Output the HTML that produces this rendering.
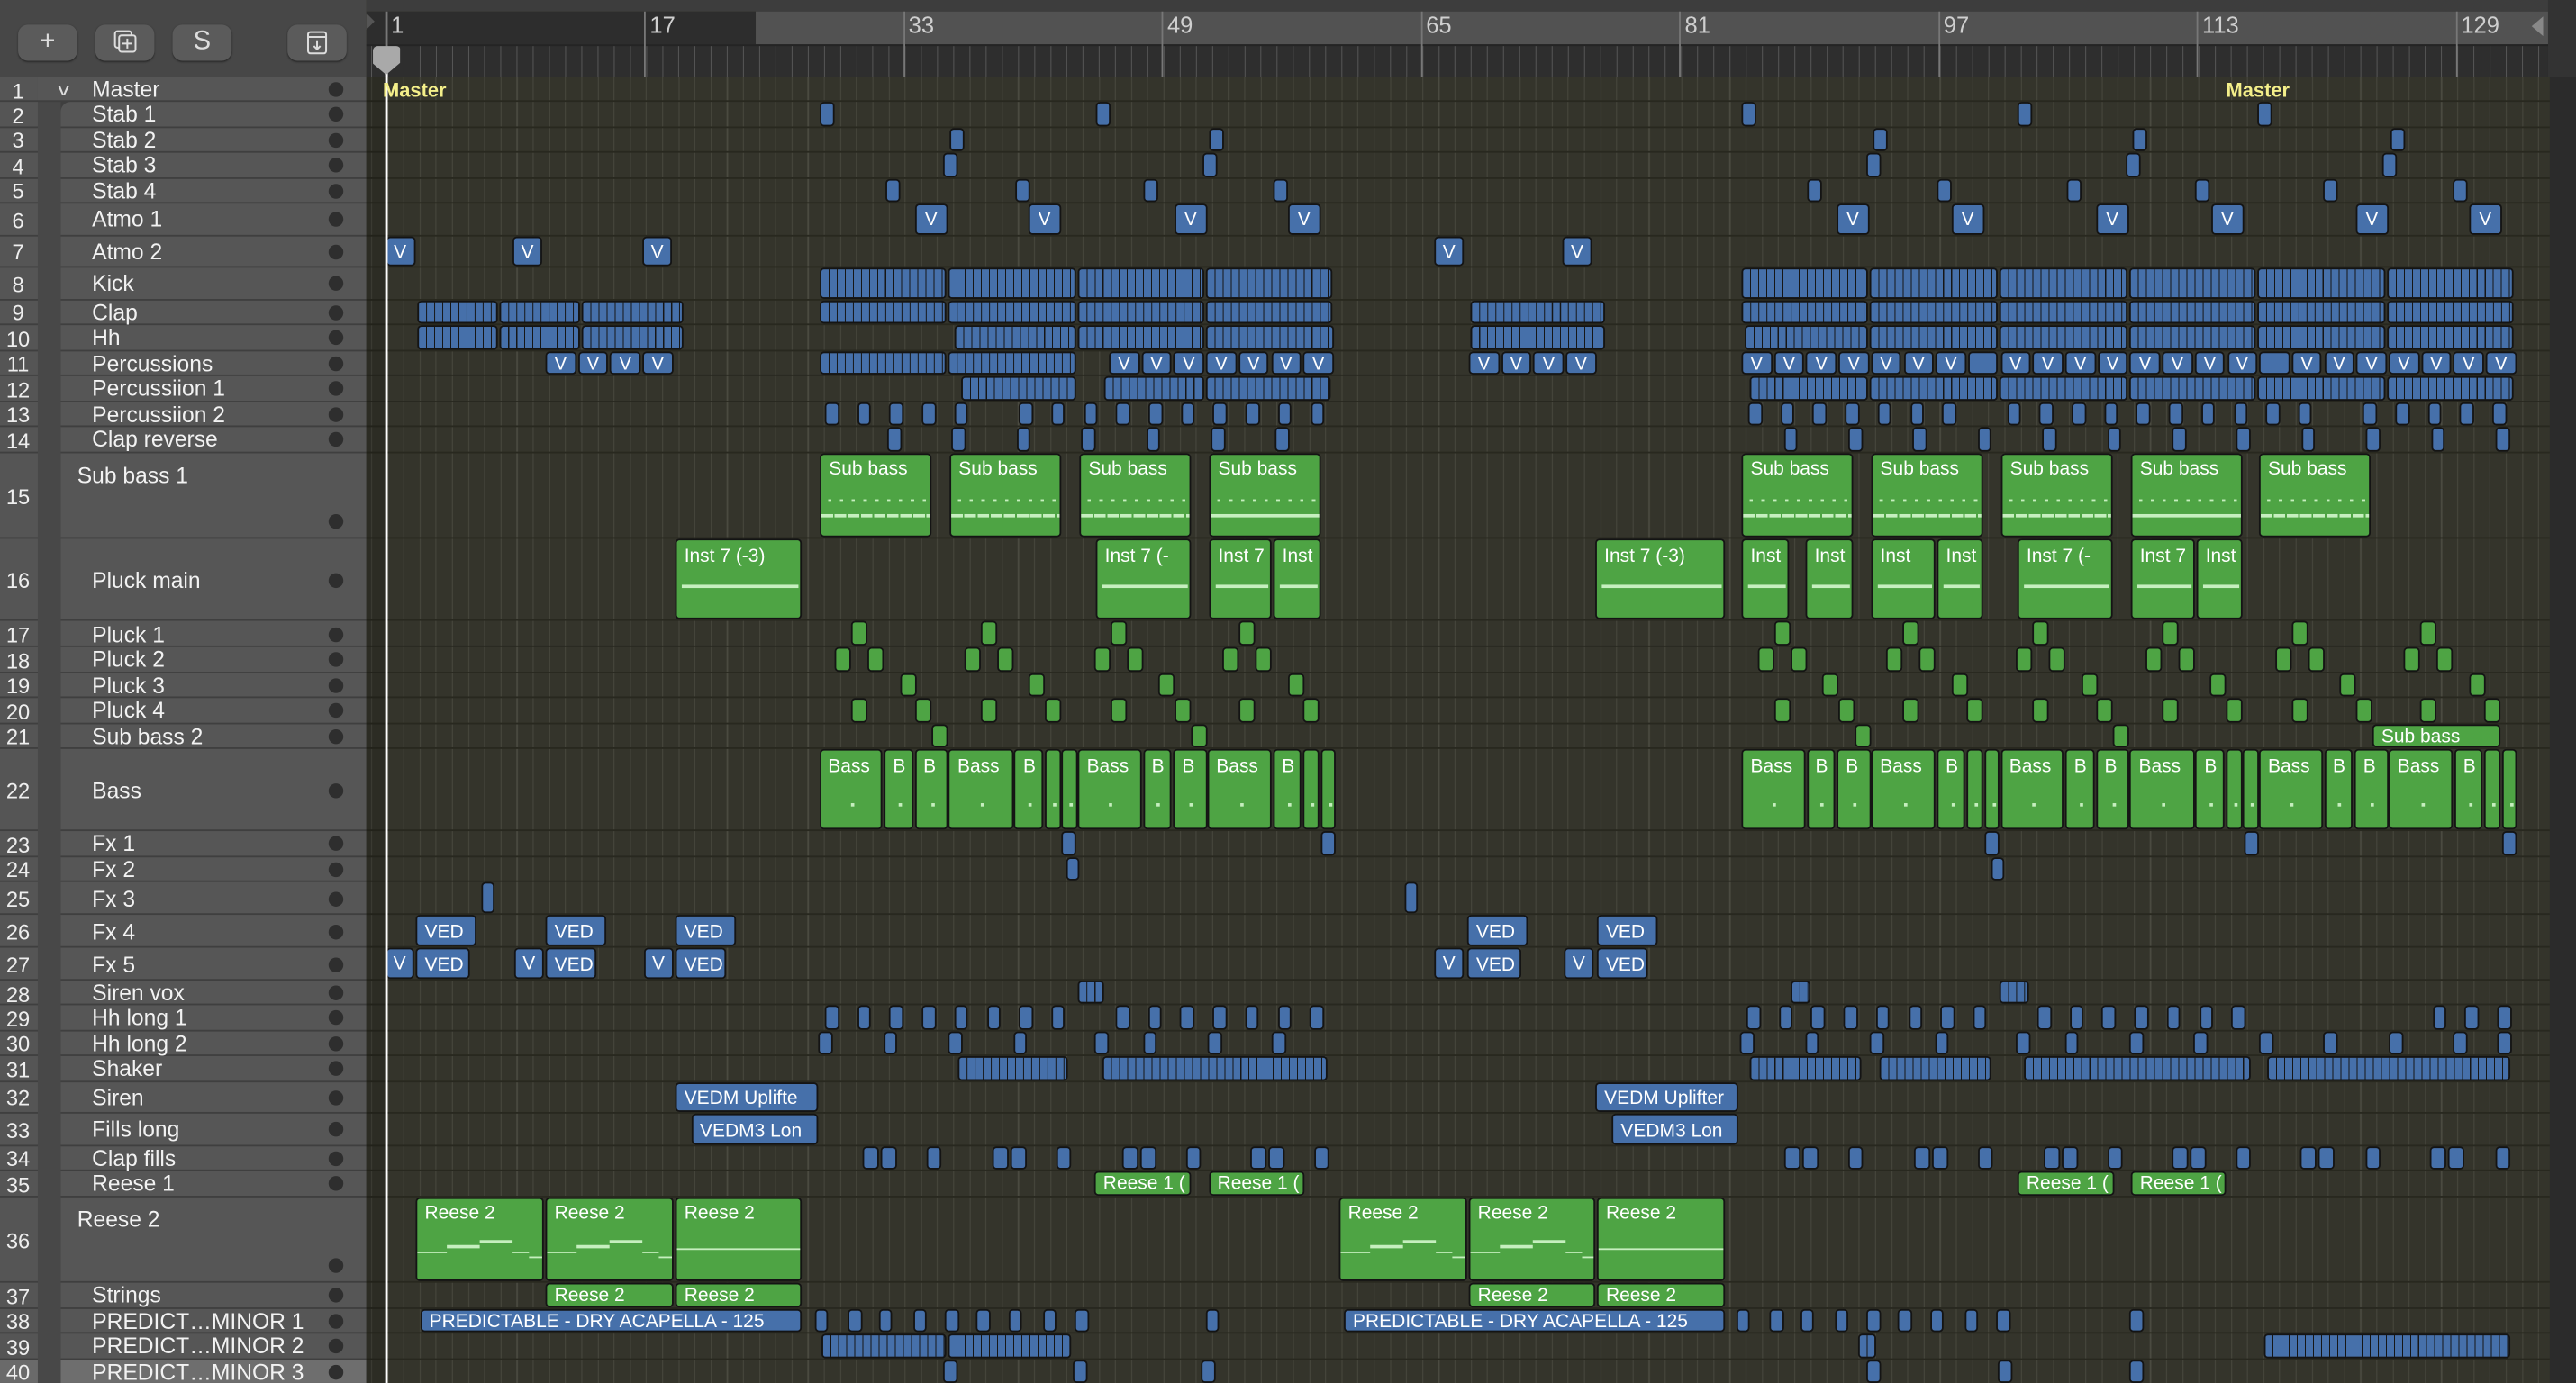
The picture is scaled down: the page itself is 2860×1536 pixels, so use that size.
<!DOCTYPE html>
<html><head><meta charset="utf-8">
<style>
html,body{margin:0;padding:0;background:#34342b;width:2860px;height:1536px;overflow:hidden}
#root{position:absolute;left:0;top:0;width:1568px;height:842px;transform:scale(1.82398,1.8242);transform-origin:0 0;overflow:hidden;font-family:"Liberation Sans",sans-serif;background:#34342b}
.abs{position:absolute}
#hdr{left:0;top:0;width:222.5px;height:47px;background:#474747}
.btn{position:absolute;top:15px;height:22px;width:36px;background:#5b5b5b;border-radius:6px;box-shadow:0 0.6px 1px #2a2a2a;color:#ddd;text-align:center;font-size:16px;line-height:22px}
#arr{left:222.5px;top:47px;width:1329px;height:795px;background-color:#34342b;background-image:repeating-linear-gradient(90deg,transparent 0 9.3px,#4a4a40 9.3px 9.844px);background-position:3.43px 0}
.row{position:absolute;left:0;width:1329px;border-bottom:0.8px solid #28281f;box-sizing:border-box}
.b{position:absolute;box-sizing:border-box;border:0.6px solid #141414;border-radius:2.5px;overflow:hidden;color:#fff;font-size:11.5px;line-height:14px;white-space:nowrap}
.bl{background:#4670aa}
.gr{background:#4ea444}
.d{background:repeating-linear-gradient(90deg,#4670aa 0 4.35px,#161616 4.35px 4.92px)}
.lbl{padding-left:4.5px;padding-top:2.5px}
.v{text-align:center}
.ln{position:absolute;height:1.4px;background:#c6efbf}
.num{position:absolute;left:0;width:22px;text-align:center;color:#eee;font-size:13px}
.nm{position:absolute;color:#f2f2f2;font-size:13.5px;white-space:nowrap}
.dot{position:absolute;left:199.5px;width:9px;height:9px;border-radius:50%;background:#2e2e2e}
</style></head><body>
<div id="root">
  <div id="hdr" class="abs">
    <div class="btn" style="left:11px">+</div>
    <div class="btn" style="left:58px"><svg width="36" height="22" viewBox="0 0 36 22"><rect x="12" y="4" width="10" height="10" rx="1.5" fill="none" stroke="#ddd" stroke-width="1.1"/><rect x="14.5" y="6.5" width="10" height="10" rx="1.5" fill="#5b5b5b" stroke="#ddd" stroke-width="1.1"/><path d="M19.5 8.5v6M16.5 11.5h6" stroke="#ddd" stroke-width="1.1"/></svg></div>
    <div class="btn" style="left:105px">S</div>
    <div class="btn" style="left:175px"><svg width="36" height="22" viewBox="0 0 36 22"><rect x="12.5" y="4.5" width="11" height="13" rx="1.5" fill="none" stroke="#ddd" stroke-width="1.1"/><path d="M12.5 7.5h11M18 9.5v5.5M16 13l2 2 2-2" fill="none" stroke="#ddd" stroke-width="1.1"/></svg></div>
  </div>
  <div class="abs" style="left:222.5px;top:0;width:1345.5px;height:6.5px;background:#3d3d3d"></div>
  <div class="abs" style="left:222.5px;top:6.5px;width:237px;height:20px;background:#2d2d2d"></div>
  <div class="abs" style="left:459.5px;top:6.5px;width:1091px;height:20px;background:#525252"></div>
  <div class="abs" style="left:222.5px;top:26.5px;width:1329px;height:20.5px;background:#2e2e2e;background-image:repeating-linear-gradient(90deg,transparent 0 9.3px,#565656 9.3px 9.844px);background-position:3.43px 0;border-top:0.8px solid #242424;box-sizing:border-box"></div>
  <div class="abs" style="left:1551px;top:0;width:17px;height:842px;background:#2b2b2b"></div>
  <div class="abs" style="left:1551px;top:0;width:17px;height:47px;background:#333"></div>
  <div class="abs" style="left:222.5px;top:8px;width:0;height:0;border-top:5px solid transparent;border-bottom:5px solid transparent;border-left:5px solid #555"></div>
  <div class="abs" style="left:1541px;top:10px;width:0;height:0;border-top:6px solid transparent;border-bottom:6px solid transparent;border-right:7px solid #888"></div>
  <div id="rul"></div>
  <div id="tl"></div>
  <div id="arr" class="abs"></div>
  <div class="abs" style="left:234.8px;top:30px;width:0.7px;height:812px;background:#fff"></div>
  <div class="abs" style="left:226.5px;top:27.5px;width:17px;height:18px;background:#a9a9a9;clip-path:polygon(0 0,100% 0,100% 60%,50% 100%,0 60%);border-radius:3px"></div>
  <div class="abs" style="left:233px;top:48px;color:#f4ef8a;font-weight:bold;font-size:12px">Master</div>
  <div class="abs" style="left:1355px;top:48px;color:#f4ef8a;font-weight:bold;font-size:12px">Master</div>
</div>
<script>
const T={1:47,2:62,3:77.5,4:93,5:108.5,6:124,7:143.5,8:163,9:182.5,10:198,11:213.5,12:229,13:244.5,14:260,15:275.5,16:328,17:378,18:394,19:409.5,20:425,21:440.5,22:456,23:506,24:521.5,25:537,26:557,27:577,28:597,29:612,30:627.5,31:643,32:658.5,33:678,34:697.5,35:713,36:728.5,37:781,38:796.5,39:812,40:827.5,41:843};
const arr=document.getElementById('arr');
const OX=222.5, OY=47;
for(let r=1;r<=40;r++){const d=document.createElement('div');d.className='row';d.style.top=(T[r]-OY)+'px';d.style.height=(T[r+1]-T[r])+'px';arr.appendChild(d);}
const dk=document.createElement('div');dk.style.cssText='position:absolute;left:0;top:0;width:12px;height:795px;background:rgba(0,0,0,0.15)';arr.appendChild(dk);
function blk(x1,x2,r,cls,label){const d=document.createElement('div');d.className='b '+cls;const h=T[r+1]-T[r]-0.9;d.style.left=(x1-OX)+'px';d.style.width=(x2-x1)+'px';d.style.top=(T[r]-OY+0.3)+'px';d.style.height=h+'px';if(label){d.textContent=label;if(label==='V'){d.classList.add('v');d.style.lineHeight=(h+0.4)+'px';}else{d.classList.add('lbl');if(h<18){d.style.paddingTop='0';d.style.lineHeight=(h-0.6)+'px';}}}arr.appendChild(d);return d;}
function ln(d,y,x1,x2,dash){const l=document.createElement('div');l.className='ln';l.style.top=y+'px';l.style.left=x1+'px';l.style.width=(x2-x1)+'px';if(dash){l.style.background='repeating-linear-gradient(90deg,#c6efbf 0 '+dash[0]+'px,transparent '+dash[0]+'px '+dash[1]+'px)';}d.appendChild(l);}
function many(xs,r,w,cls,label){xs.forEach(x=>blk(x,x+w,r,cls||'bl',label));}
function step(x0,n,st,skip){const a=[];for(let k=0;k<n;k++){if(skip&&skip.includes(k))continue;a.push(x0+k*st);}return a;}
function dense(segs,r){segs.forEach(s=>blk(s[0],s[1],r,'d'));}
const S=561;
many([499,667,1060,1228,1374],2,8.5);
many([578,736,1140,1298,1455],3,9);
many([574,732,1136,1294,1450],4,9);
many([539,618,696,775,1100,1179,1258,1336,1414,1493],5,9);
many([557,626,715,784,1118,1188,1276,1346,1434,1503],6,19.5,'bl','V');
many([234.5,312,391,873,951],7,18,'bl','V');
dense([[499,576],[577,655],[656,733],[734,811],[1060,1137],[1138,1216],[1217,1295],[1296,1373],[1374,1452],[1453,1530]],8);
dense([[254,303],[304,353],[354,416],[499,576],[577,655],[656,733],[734,811],[895,977],[1060,1137],[1138,1216],[1217,1295],[1296,1373],[1374,1452],[1453,1530]],9);
dense([[254,303],[304,353],[354,416],[581,655],[656,733],[734,812],[895,977],[1062,1137],[1138,1216],[1217,1295],[1296,1373],[1374,1452],[1453,1530]],10);
dense([[499,576],[577,655]],11);
many([332,351.7,371.4,391.1],11,18.5,'bl','V');
many(step(675,7,19.7),11,18.5,'bl','V');
many([894,913.7,933.4,953.1],11,18.5,'bl','V');
many(step(1060,24,19.7,[7,16]),11,18.5,'bl','V');
many([1197.9,1375.2],11,18.5);
dense([[585,655],[672,733],[734,810],[1065,1137],[1138,1216],[1217,1295],[1296,1373],[1374,1452],[1453,1530]],12);
many(step(502,16,19.7,[5]),13,8.5);
many(step(1064,24,19.7,[7,18]),13,8.5);
many(step(540,7,39.4),14,8.5);
many(step(1085.6,12,39.4),14,8.5);
[[499,567],[578,646],[657,725],[736,804],[1060,1128],[1139,1207],[1218,1286],[1297,1365],[1375,1443]].forEach((s,i)=>{const d=blk(s[0],s[1],15,'gr','Sub bass');const w=s[1]-s[0];ln(d,27,4,w-4,[2,7.2]);ln(d,36.5,0,w,i%4==3?null:[7,8]);});
[[411,488,'Inst 7 (-3)'],[667,725,'Inst 7 (-'],[736,774,'Inst 7'],[775,804,'Inst'],[971,1050,'Inst 7 (-3)'],[1060,1089,'Inst'],[1099,1128,'Inst'],[1139,1178,'Inst'],[1179,1207,'Inst'],[1228,1286,'Inst 7 (-'],[1297,1336,'Inst 7'],[1337,1365,'Inst']].forEach(s=>{const d=blk(s[0],s[1],16,'gr',s[2]);ln(d,27,3,s[1]-s[0]-3);});
const GB=[498.5,577.3,656,734.8], GD=[1060,1138.8,1217.5,1296.3,1375,1453.8];
[GB,GD].forEach(G=>G.forEach((x0,i)=>{
 blk(x0+19.5,x0+29.5,17,'gr');blk(x0+9.5,x0+19.5,18,'gr');blk(x0+29.5,x0+39.5,18,'gr');
 blk(x0+49,x0+59,19,'gr');blk(x0+19.5,x0+29.5,20,'gr');blk(x0+58.5,x0+68.5,20,'gr');
 if(i%2==0&&x0<1400)blk(x0+68.5,x0+78.5,21,'gr');
 const t=[[0,38.5,'Bass'],[39.5,57,'B'],[58,78.5,'B']],u=[[0,39.5,'Bass'],[40,57.5,'B'],[58.5,68.5,''],[69,78.5,'']];
 (i%2==0?t:u).forEach(p=>{const d=blk(x0+p[0],x0+p[1],22,'gr',p[2]);const sq=document.createElement('div');sq.style.cssText='position:absolute;width:2px;height:2px;background:#c6efbf;left:'+((p[1]-p[0])/2-1)+'px;top:32px';d.appendChild(sq);});
}));
blk(1444,1522,21,'gr','Sub bass');
many([646,804,1208,1366,1523],23,9);
many([649,1212],24,8);
many([293,855],25,8);
[[253,290],[332,369],[411,448],[893,930],[972,1009]].forEach(s=>blk(s[0],s[1],26,'bl','VED'));
[[234.5,252],[313,331],[391.6,410],[873,891],[952,970]].forEach(s=>blk(s[0],s[1],27,'bl','V'));
[[253,285.5],[332,363],[411,441.6],[893,926],[972,1003]].forEach(s=>blk(s[0],s[1],27,'bl','VED'));
dense([[656,672],[1090,1102],[1217,1235]],28);
const h29=step(502,8,19.7).concat(step(679,7,19.7));
many(h29,29,8.5);many(h29.map(x=>x+S),29,8.5);many([1480.6,1500.3,1520],29,8.5);
const h30=[498,537.8,577,616.6,666,695.5,735,774.3];
many(h30,30,8.5);many(h30.map(x=>x+S),30,8.5);many([1375,1414,1454,1493,1520],30,8.5);
dense([[582.8,650],[671,808],[1065,1133],[1144,1212],[1232,1370],[1380,1528]],31);
blk(411,498,32,'bl','VEDM Uplifte');blk(971,1058,32,'bl','VEDM Uplifter');
blk(420.5,498,33,'bl','VEDM3 Lon');blk(981,1058,33,'bl','VEDM3 Lon');
const c34=[[524.6,535],[536,546],[564,573],[604,614],[615,625],[643,652],[683,693],[694,704],[722,731],[760.5,771],[772,782],[800,809]];
c34.forEach(s=>blk(s[0],s[1],34,'bl'));c34.forEach(s=>blk(s[0]+S,s[1]+S,34,'bl'));
[[1400,1410],[1411,1421],[1440,1449],[1479,1489],[1490,1500],[1519,1528]].forEach(s=>blk(s[0],s[1],34,'bl'));
[[666,725],[735.5,794],[1228,1287],[1297,1355]].forEach(s=>blk(s[0],s[1],35,'gr','Reese 1 ('));
[[253,331,0],[332,410,0],[411,488,1],[815,893,0],[894,971,2],[972,1050,1]].forEach(s=>{const d=blk(s[0],s[1],36,'gr','Reese 2');const w=s[1]-s[0];
 if(s[2]==1){ln(d,30,0,w);}else{ln(d,32,0,18);ln(d,28.5,18,38);ln(d,25.5,38,58);ln(d,32,58,68);ln(d,35,68,w);}});
[[332,410],[411,488],[894,971],[972,1050]].forEach(s=>blk(s[0],s[1],37,'gr','Reese 2'));
blk(255.8,488,38,'bl','PREDICTABLE - DRY ACAPELLA - 125');blk(818,1050,38,'bl','PREDICTABLE - DRY ACAPELLA - 125');
const p38=[495.5,516,534.7,555.8,575,594.3,613.5,634.7,654];
many(p38.concat([733.5]),38,8.5);many(p38.map(x=>x+S).concat([1296]),38,8.5);
dense([[500,576],[577,652],[1131,1142],[1378,1528]],39);
many([574,653,731,1136,1216,1296],40,8.5);

const rul=document.getElementById('rul');
[1,17,33,49,65,81,97,113,129].forEach((b,i)=>{const x=235+i*157.5;const l=document.createElement('div');l.className='abs';l.style.cssText='left:'+(x-0.3)+'px;top:6.5px;width:0.6px;height:40px;background:#777';rul.appendChild(l);const t=document.createElement('div');t.className='abs';t.textContent=b;t.style.cssText='left:'+(x+3)+'px;top:7px;color:#cfcfcf;font-size:14px';rul.appendChild(t);});

const tl=document.getElementById('tl');
const names=['Master','Stab 1','Stab 2','Stab 3','Stab 4','Atmo 1','Atmo 2','Kick','Clap','Hh','Percussions','Percussiion 1','Percussiion 2','Clap reverse','Sub bass 1','Pluck main','Pluck 1','Pluck 2','Pluck 3','Pluck 4','Sub bass 2','Bass','Fx 1','Fx 2','Fx 3','Fx 4','Fx 5','Siren vox','Hh long 1','Hh long 2','Shaker','Siren','Fills long','Clap fills','Reese 1','Reese 2','Strings','PREDICT…MINOR 1','PREDICT…MINOR 2','PREDICT…MINOR 3'];
const bg=document.createElement('div');bg.style.cssText='position:absolute;left:0;top:47px;width:222.5px;height:795px;background:#3f3f3f';tl.appendChild(bg);
const gut=document.createElement('div');gut.style.cssText='position:absolute;left:22.5px;top:62px;width:14.5px;height:780px;background:#484848';tl.appendChild(gut);
for(let r=1;r<=40;r++){
 const top=T[r],h=T[r+1]-T[r];
 const n=document.createElement('div');n.style.cssText='position:absolute;left:0;top:'+top+'px;width:22.5px;height:'+(h-0.9)+'px;background:'+(r==40?'#6a6a6a':'#555');tl.appendChild(n);
 const rw=document.createElement('div');const lx=r==1?22.5:37;rw.style.cssText='position:absolute;left:'+lx+'px;top:'+top+'px;width:'+(222.5-lx)+'px;height:'+(h-0.9)+'px;background:'+(r==40?'#6e6e6e':'#565656')+(r==2?';border-top-left-radius:6px':'');tl.appendChild(rw);
 const top15=(r==15||r==36);
 const num=document.createElement('div');num.className='num';num.textContent=r;num.style.top=(top+h/2-7)+'px';tl.appendChild(num);
 const nm=document.createElement('div');nm.className='nm';nm.textContent=names[r-1];
 nm.style.left=(top15?47:56)+'px';nm.style.top=(top15?top+6:top+h/2-7.5)+'px';tl.appendChild(nm);
 const dt=document.createElement('div');dt.className='dot';dt.style.top=(top15?top+h-15:top+h/2-4.5)+'px';tl.appendChild(dt);
}
const ch=document.createElement('div');ch.style.cssText='position:absolute;left:36px;top:49px;color:#ddd;font-size:11px;transform:scaleX(1.3)';ch.textContent='v';tl.appendChild(ch);
const sep=document.createElement('div');sep.style.cssText='position:absolute;left:222.5px;top:47px;width:1px;height:795px;background:#2a2a2a';tl.appendChild(sep);
</script>
</body></html>
